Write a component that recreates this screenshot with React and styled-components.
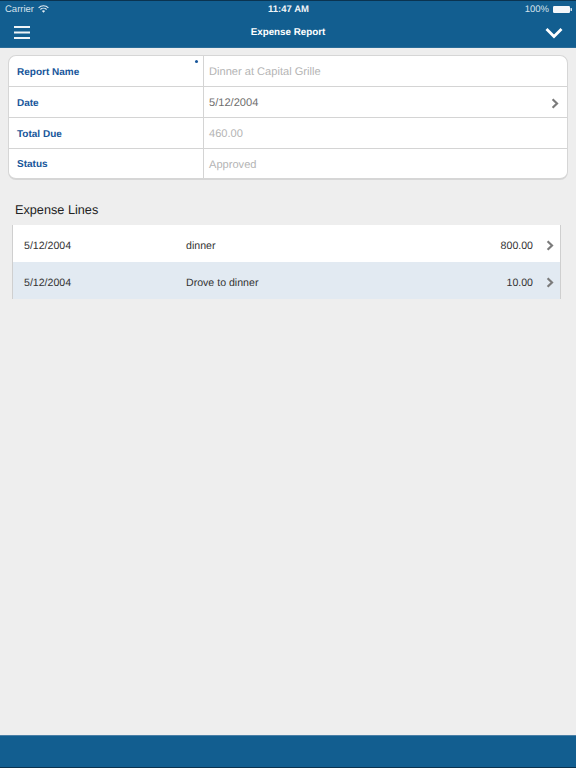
import React from 'react';
import styled, { createGlobalStyle } from 'styled-components';

const GlobalStyle = createGlobalStyle`
  html, body {
    margin: 0;
    padding: 0;
    height: 100%;
    background: #eeeeee;
    font-family: "Liberation Sans", Arial, sans-serif;
    text-rendering: geometricPrecision;
  }
  #root {
    height: 100%;
  }
`;

const Page = styled.div`
  width: 576px;
  height: 768px;
  display: flex;
  flex-direction: column;
  background: #eeeeee;
  overflow: hidden;
`;

const Header = styled.header`
  height: 48px;
  box-sizing: border-box;
  background: #125e90;
  border-top: 1px solid #0a3350;
  border-bottom: 1px solid #2a6c98;
  color: #fff;
  flex-shrink: 0;
`;

const StatusBar = styled.div`
  height: 15px;
  display: flex;
  align-items: center;
  justify-content: space-between;
  padding: 1px 4px 0 5px;
  box-sizing: border-box;
  font-size: 9.5px;
  color: #d5e2ec;
`;

const StatusSide = styled.div`
  width: 120px;
  display: flex;
  align-items: center;
  gap: 4px;
  justify-content: ${props => (props.end ? 'flex-end' : 'flex-start')};
`;

const Clock = styled.div`
  font-weight: bold;
  color: #f1f5f8;
`;

const NavBar = styled.div`
  height: 31px;
  box-sizing: border-box;
  display: flex;
  align-items: center;
  justify-content: space-between;
  padding: 2px 13px 0;
`;

const NavTitle = styled.div`
  font-size: 9.8px;
  font-weight: bold;
`;

const IconButton = styled.div`
  display: flex;
  width: 18px;
  justify-content: center;
`;

const Content = styled.main`
  flex: 1;
  padding: 7px 8px 0;
`;

const FormCard = styled.div`
  background: #fff;
  border: 1px solid #d6d6d6;
  border-bottom-width: 2px;
  border-radius: 8px;
  overflow: hidden;
`;

const FormRow = styled.div`
  height: 30px;
  display: flex;
  border-top: ${props => (props.first ? 'none' : '1px solid #d4d4d4')};

  &:last-child {
    height: 29px;
  }
`;

const FormLabel = styled.div`
  position: relative;
  width: 195px;
  box-sizing: border-box;
  padding: 2px 0 0 8px;
  display: flex;
  align-items: center;
  font-size: 10px;
  font-weight: bold;
  color: #17569a;
  border-right: 1px solid #d4d4d4;
`;

const RequiredDot = styled.span`
  position: absolute;
  top: 4px;
  right: 5px;
  width: 3px;
  height: 3px;
  border-radius: 50%;
  background: #17569a;
`;

const FormValue = styled.div`
  flex: 1;
  display: flex;
  align-items: center;
  justify-content: space-between;
  padding: 2px 8px 0 5px;
  font-size: 11.1px;
  color: ${props => (props.muted ? '#b4b4b4' : '#6e6e6e')};
`;

const SectionTitle = styled.h2`
  margin: 23px 0 7px 7px;
  font-size: 12.7px;
  line-height: 15px;
  font-weight: normal;
  color: #222;
`;

const LinesTable = styled.div`
  margin: 0 7px 0 4px;
  border-left: 1px solid #cfcfcf;
  border-right: 1px solid #cfcfcf;
`;

const LineRow = styled.div`
  height: 37px;
  box-sizing: border-box;
  display: flex;
  align-items: center;
  padding: 4px 6px 0 11px;
  font-size: 10.6px;
  color: #333;
  background: ${props => (props.alt ? '#e2eaf2' : '#fff')};
`;

const LineDate = styled.div`
  width: 162px;
`;

const LineDesc = styled.div`
  flex: 1;
`;

const LineAmount = styled.div`
  margin-right: 13px;
`;

const Footer = styled.footer`
  height: 33px;
  box-sizing: border-box;
  background: #125e90;
  border-top: 1px solid #4a7fa6;
  border-bottom: 1px solid #0a3350;
  flex-shrink: 0;
`;

const Chevron = () => (
  <svg width="8" height="11" viewBox="0 0 8 11">
    <path d="M1.6 1.2 L6 5.5 L1.6 9.8" fill="none" stroke="#7b7b7b" strokeWidth="2.2" />
  </svg>
);

const Wifi = () => (
  <svg width="11" height="8" viewBox="0 0 11 8">
    <path d="M0.6 2.8 A7 7 0 0 1 10.4 2.8" fill="none" stroke="#e4edf3" strokeWidth="1.1" />
    <path d="M2.4 4.5 A4.4 4.4 0 0 1 8.6 4.5" fill="none" stroke="#e4edf3" strokeWidth="1.1" />
    <path d="M3.9 6 L5.5 7.8 L7.1 6 A2.3 2.3 0 0 0 3.9 6 Z" fill="#e4edf3" />
  </svg>
);

const Battery = () => (
  <svg width="19" height="7" viewBox="0 0 19 7">
    <rect x="0" y="0" width="17" height="7" rx="1.2" fill="#f3f6f9" />
    <rect x="17.5" y="2" width="1.5" height="3" rx="0.6" fill="#d5e2ec" />
  </svg>
);

const Menu = () => (
  <svg width="16" height="13" viewBox="0 0 16 13">
    <rect y="0" width="16" height="2" fill="#eef3f7" />
    <rect y="5.5" width="16" height="2" fill="#eef3f7" />
    <rect y="11" width="16" height="2" fill="#eef3f7" />
  </svg>
);

const ChevronDown = () => (
  <svg width="18" height="12" viewBox="0 0 18 12">
    <path d="M1.5 2 L9 9.5 L16.5 2" fill="none" stroke="#fff" strokeWidth="2.8" />
  </svg>
);

const formRows = [
  { label: 'Report Name', value: 'Dinner at Capital Grille', muted: true, required: true },
  { label: 'Date', value: '5/12/2004', chevron: true },
  { label: 'Total Due', value: '460.00', muted: true },
  { label: 'Status', value: 'Approved', muted: true },
];

const expenseLines = [
  { date: '5/12/2004', desc: 'dinner', amount: '800.00' },
  { date: '5/12/2004', desc: 'Drove to dinner', amount: '10.00' },
];

export default function App() {
  return (
    <Page>
      <GlobalStyle />
      <Header>
        <StatusBar>
          <StatusSide>
            Carrier <Wifi />
          </StatusSide>
          <Clock>11:47 AM</Clock>
          <StatusSide end>
            100% <Battery />
          </StatusSide>
        </StatusBar>
        <NavBar>
          <IconButton>
            <Menu />
          </IconButton>
          <NavTitle>Expense Report</NavTitle>
          <IconButton>
            <ChevronDown />
          </IconButton>
        </NavBar>
      </Header>

      <Content>
        <FormCard>
          {formRows.map((row, idx) => (
            <FormRow key={row.label} first={idx === 0}>
              <FormLabel>
                {row.label}
                {row.required && <RequiredDot />}
              </FormLabel>
              <FormValue muted={row.muted}>
                {row.value}
                {row.chevron && <Chevron />}
              </FormValue>
            </FormRow>
          ))}
        </FormCard>

        <SectionTitle>Expense Lines</SectionTitle>
        <LinesTable>
          {expenseLines.map((line, idx) => (
            <LineRow key={line.desc} alt={idx % 2 === 1}>
              <LineDate>{line.date}</LineDate>
              <LineDesc>{line.desc}</LineDesc>
              <LineAmount>{line.amount}</LineAmount>
              <Chevron />
            </LineRow>
          ))}
        </LinesTable>
      </Content>

      <Footer />
    </Page>
  );
}
